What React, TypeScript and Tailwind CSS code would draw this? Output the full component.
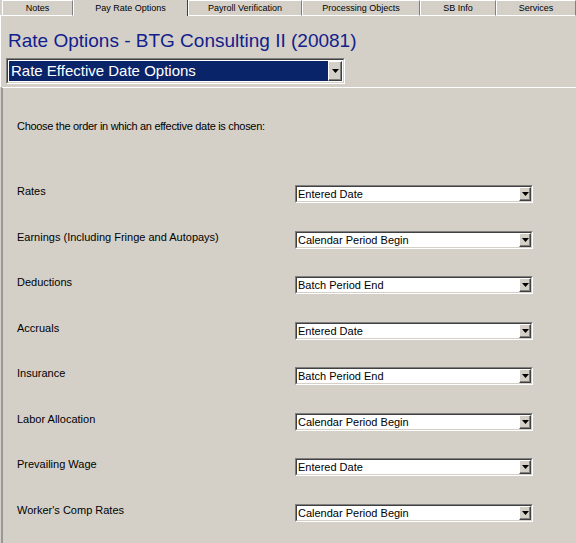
import React from "react";

const Arrow = () => (
  <svg width="7" height="4" viewBox="0 0 7 4" className="block">
    <path d="M0 0H7L3.5 4Z" fill="#000" />
  </svg>
);

const ArrowButton = ({ w, h }: { w: string; h: string }) => (
  <div
    className={`${w} ${h} shrink-0 bg-[#d4d0c8] border border-t-white border-l-white border-b-[#404040] border-r-[#404040] shadow-[inset_-1px_-1px_0_#808080] flex items-center justify-center`}
  >
    <Arrow />
  </div>
);

const Select = ({ value }: { value: string }) => (
  <div className="w-[238px] h-[18px] border border-t-[#808080] border-l-[#808080] border-b-white border-r-white">
    <div className="h-full border border-t-[#404040] border-l-[#404040] border-b-[#d4d0c8] border-r-[#d4d0c8] bg-white flex items-center">
      <span className="flex-1 pl-[1px] text-[11px] leading-[14px] text-black whitespace-nowrap overflow-hidden">
        {value}
      </span>
      <ArrowButton w="w-[12px]" h="h-[14px]" />
    </div>
  </div>
);

const Tab = ({ label, w }: { label: string; w: string }) => (
  <div
    className={`${w} h-[16px] border border-t-white border-l-white border-r-[#808080] border-b-white flex items-center justify-center text-[9px] leading-[10px] text-black whitespace-nowrap`}
  >
    {label}
  </div>
);

const rows: [string, string][] = [
  ["Rates", "Entered Date"],
  ["Earnings (Including Fringe and Autopays)", "Calendar Period Begin"],
  ["Deductions", "Batch Period End"],
  ["Accruals", "Entered Date"],
  ["Insurance", "Batch Period End"],
  ["Labor Allocation", "Calendar Period Begin"],
  ["Prevailing Wage", "Entered Date"],
  ["Worker's Comp Rates", "Calendar Period Begin"],
];

export default function App() {
  return (
    <div className="w-[576px] h-[543px] overflow-hidden bg-[#d4d0c8] font-['Liberation_Sans',Arial,sans-serif] flex flex-col">
      {/* Tabs */}
      <div className="flex h-[16px] shrink-0">
        <div className="w-[2px] h-[16px] border-b border-b-white" />
        <Tab label="Notes" w="w-[71px]" />
        <div className="w-[115px] h-[16px] border-l border-l-white border-r border-r-[#404040] flex items-center justify-center text-[9px] leading-[10px] text-black whitespace-nowrap">
          Pay Rate Options
        </div>
        <Tab label="Payroll Verification" w="w-[114px]" />
        <Tab label="Processing Objects" w="w-[118px]" />
        <Tab label="SB Info" w="w-[76px]" />
        <div className="flex-1">
          <Tab label="Services" w="w-full" />
        </div>
      </div>

      {/* Top area */}
      <div className="border-l border-l-white flex flex-col shrink-0">
        <div className="mt-[13px] pl-[7px] text-[19px] leading-[23px] text-[#12208c] whitespace-nowrap">
          Rate Options - BTG Consulting II (20081)
        </div>
        <div className="mt-[6px] ml-[5px] w-[339px] h-[26px] border border-t-[#808080] border-l-[#808080] border-b-white border-r-white">
          <div className="h-full border border-t-[#404040] border-l-[#404040] border-b-[#d4d0c8] border-r-[#d4d0c8] bg-white p-[1px] flex">
            <div className="flex-1 bg-[#0a246a] text-white text-[15px] leading-[20px] pl-[2px] whitespace-nowrap">
              Rate Effective Date Options
            </div>
            <ArrowButton w="w-[14px]" h="h-[20px]" />
          </div>
        </div>
        <div className="h-[3px]" />
      </div>

      {/* Lower panel */}
      <div className="flex-1 ml-[1px] border-t border-t-white border-l-2 border-l-[#9a9894] flex flex-col">
        <div className="mt-[32px] pl-[14px] text-[11px] leading-[13px] tracking-[-0.3px] text-black">
          Choose the order in which an effective date is chosen:
        </div>
        <div className="mt-[52px] flex flex-col">
          {rows.map(([label, value], i) => (
            <div key={i} className="h-[45.5px] shrink-0 flex items-start">
              <div className="w-[292px] pl-[14px] text-[11px] leading-[13px] text-black whitespace-nowrap">
                {label}
              </div>
              <Select value={value} />
            </div>
          ))}
        </div>
      </div>
    </div>
  );
}
